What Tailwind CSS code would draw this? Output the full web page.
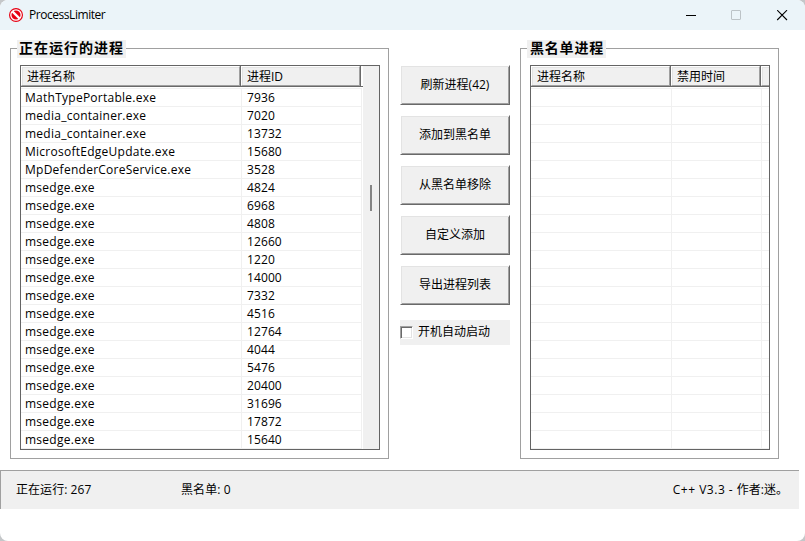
<!DOCTYPE html>
<html lang="zh-CN">
<head>
  <meta charset="UTF-8">
  <meta name="viewport" content="width=device-width, initial-scale=1.0">
  <title>ProcessLimiter</title>
  <script src="https://cdn.jsdelivr.net/npm/@tailwindcss/browser@4"></script>
</head>
<body class="bg-[#c4c7c9] font-['Open_Sans','Noto_Sans_CJK_SC',sans-serif] text-xs text-black">
  <div class="w-[805px] h-[541px] bg-white rounded-lg overflow-hidden flex flex-col">
    <header class="h-[30px] shrink-0 bg-[#ebf4f9] flex items-center pl-2">
      <svg class="w-4 h-4" viewBox="0 0 16 16">
        <circle cx="8" cy="8" r="7" fill="#e60012"/>
        <circle cx="8" cy="8" r="5.2" fill="#e60012" stroke="#fff" stroke-width="1.3"/>
        <path d="M4.6 4.6L11.4 11.4" stroke="#fff" stroke-width="2.2"/>
      </svg>
      <span class="ml-[5px] leading-[28px] tracking-[-0.45px]">ProcessLimiter</span>
      <svg class="ml-auto mr-[17px] w-[102px] h-[11px]" viewBox="0 0 102 11" fill="none">
        <path d="M0 5.5H10" stroke="#000"/>
        <rect x="45.5" y="0.5" width="9" height="9" rx="0.5" stroke="#bcc3c7"/>
        <path d="M91.2 0.2L101 10M101 0.2L91.2 10" stroke="#000" stroke-width="1.1"/>
      </svg>
    </header>

    <main class="flex items-start pl-[10px] pt-[18px] h-[440px] shrink-0">
      <section class="relative w-[379px] h-[411px] border border-[#a0a0a0] pl-[9px] pt-4">
        <h2 class="absolute left-[6px] top-[-9px] w-[109px] h-[18px] pl-[2px] bg-[#f0f0f0] text-[14px] leading-[16px] font-bold tracking-[1px] whitespace-nowrap">正在运行的进程</h2>
        <div class="w-[360px] h-[385px] border border-[#646464] flex overflow-hidden">
          <div class="w-[342px] shrink-0">
            <div class="flex h-[21px] border-b border-[#696969]">
              <div class="w-[220px] border-r border-[#696969]"><div class="h-5 pl-[5px] leading-[20px] bg-[#f0f0f0] border border-t-white border-l-white border-r-[#a0a0a0] border-b-[#a0a0a0] shadow-[inset_1px_1px_#e3e3e3]">进程名称</div></div>
              <div class="w-[120px] border-r border-[#696969]"><div class="h-5 pl-[5px] leading-[20px] bg-[#f0f0f0] border border-t-white border-l-white border-r-[#a0a0a0] border-b-[#a0a0a0] shadow-[inset_1px_1px_#e3e3e3]">进程ID</div></div>
            </div>
            <div id="running" class="mt-px w-[341px] border-t border-[#f0f0f0]"></div>
          </div>
          <div class="w-4 bg-[#f0f0f0] pl-[7px] pt-[119px]"><div class="w-[2px] h-[26px] bg-[#858585]"></div></div>
        </div>
      </section>

      <div class="ml-[11px] mt-[17px] w-[110px]">
        <div id="buttons" class="flex flex-col gap-[10px]"></div>
        <label class="mt-[15px] h-[25px] bg-[#f0f0f0] flex items-center">
          <span class="w-[13px] h-[13px] bg-white border border-t-[#a0a0a0] border-l-[#a0a0a0] border-r-white border-b-white shadow-[inset_1px_1px_#696969,inset_-1px_-1px_#e3e3e3]"></span>
          <span class="ml-[5px] leading-[22px] h-6">开机自动启动</span>
        </label>
      </div>

      <section class="relative ml-[10px] w-[259px] h-[411px] border border-[#a0a0a0] pl-[9px] pt-4">
        <h2 class="absolute left-[6px] top-[-9px] w-[79px] h-[18px] pl-[3px] bg-[#f0f0f0] text-[14px] leading-[16px] font-bold tracking-[0.8px] whitespace-nowrap">黑名单进程</h2>
        <div class="w-[240px] h-[385px] border border-[#646464] overflow-hidden">
          <div class="flex h-[21px] border-b border-[#696969]">
            <div class="w-[140px] shrink-0 border-r border-[#696969]"><div class="h-5 pl-[5px] leading-[20px] bg-[#f0f0f0] border border-t-white border-l-white border-r-[#a0a0a0] border-b-[#a0a0a0] shadow-[inset_1px_1px_#e3e3e3]">进程名称</div></div>
            <div class="w-[90px] shrink-0 border-r border-[#696969]"><div class="h-5 pl-[5px] leading-[20px] bg-[#f0f0f0] border border-t-white border-l-white border-r-[#a0a0a0] border-b-[#a0a0a0] shadow-[inset_1px_1px_#e3e3e3]">禁用时间</div></div>
            <div class="grow h-5 bg-[#f0f0f0] border-t border-l border-b border-t-white border-l-white border-b-[#a0a0a0] shadow-[inset_1px_1px_#e3e3e3]"></div>
          </div>
          <div id="blocked" class="mt-px border-t border-[#f0f0f0]"></div>
        </div>
      </section>
    </main>

    <footer class="w-[799px] h-[39px] bg-[#f0f0f0] border-t border-l border-[#a0a0a0] flex items-center pl-[15px] pr-[11px]">
      <span class="w-[165px] tracking-[0.05px]">正在运行: 267</span>
      <span class="tracking-[0.1px]">黑名单: 0</span>
      <span class="ml-auto"><span class="tracking-[0.5px]">C++ V3.3 - </span>作者:迷。</span>
    </footer>
  </div>

  <script>
    const processes = [
      ['MathTypePortable.exe', 7936],
      ['media_container.exe', 7020],
      ['media_container.exe', 13732],
      ['MicrosoftEdgeUpdate.exe', 15680],
      ['MpDefenderCoreService.exe', 3528],
      ...[4824, 6968, 4808, 12660, 1220, 14000, 7332, 4516, 12764, 4044, 5476, 20400, 31696, 17872, 15640].map(id => ['msedge.exe', id])
    ];
    document.getElementById('running').innerHTML = processes.map(([name, id]) => `
      <div class="flex h-[18px] leading-[17px] border-b border-[#f0f0f0]">
        <div class="w-[221px] pl-1 border-r border-[#f0f0f0] tracking-[0.26px]">${name}</div>
        <div class="w-[120px] pl-[5px] border-r border-[#f0f0f0] tracking-[0.1px]">${id}</div>
      </div>`).join('');

    document.getElementById('blocked').innerHTML = Array(20).fill(`
      <div class="flex h-[18px] border-b border-[#f0f0f0]">
        <div class="w-[141px] border-r border-[#f0f0f0]"></div>
        <div class="w-[90px] border-r border-[#f0f0f0]"></div>
      </div>`).join('');

    document.getElementById('buttons').innerHTML = ['刷新进程(42)', '添加到黑名单', '从黑名单移除', '自定义添加', '导出进程列表'].map(text => `
      <button class="w-[110px] h-10 bg-[#f0f0f0] border border-t-white border-l-white border-r-[#696969] border-b-[#696969] shadow-[inset_1px_1px_#e3e3e3,inset_-1px_-1px_#a0a0a0]">${text}</button>`).join('');
  </script>
</body>
</html>
